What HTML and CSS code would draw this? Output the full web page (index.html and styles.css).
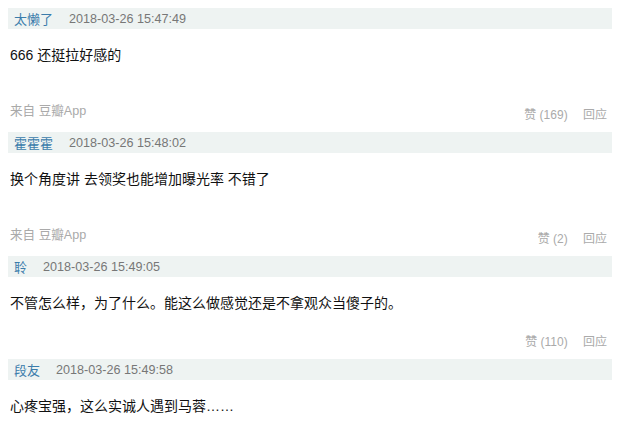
FILE: index.html
```html
<!DOCTYPE html>
<html lang="zh-CN">
<head>
    <meta charset="UTF-8">
    <title>评论</title>
    <link rel="stylesheet" href="styles.css">
</head>
<body>
    <div class="comments">
        <div class="comment">
            <div class="comment-head">
                <span class="author">太懒了</span>
                <span class="time">2018-03-26 15:47:49</span>
            </div>
            <p class="comment-text">666 还挺拉好感的</p>
            <div class="comment-foot">
                <span class="source">来自 豆瓣App</span>
                <div class="actions">
                    <span>赞 (169)</span>
                    <span class="reply">回应</span>
                </div>
            </div>
        </div>

        <div class="comment">
            <div class="comment-head">
                <span class="author">霍霍霍</span>
                <span class="time">2018-03-26 15:48:02</span>
            </div>
            <p class="comment-text">换个角度讲 去领奖也能增加曝光率 不错了</p>
            <div class="comment-foot">
                <span class="source">来自 豆瓣App</span>
                <div class="actions">
                    <span>赞 (2)</span>
                    <span class="reply">回应</span>
                </div>
            </div>
        </div>

        <div class="comment">
            <div class="comment-head">
                <span class="author">聆</span>
                <span class="time">2018-03-26 15:49:05</span>
            </div>
            <p class="comment-text">不管怎么样，为了什么。能这么做感觉还是不拿观众当傻子的。</p>
            <div class="comment-foot">
                <div class="actions">
                    <span>赞 (110)</span>
                    <span class="reply">回应</span>
                </div>
            </div>
        </div>

        <div class="comment">
            <div class="comment-head">
                <span class="author">段友</span>
                <span class="time">2018-03-26 15:49:58</span>
            </div>
            <p class="comment-text">心疼宝强，这么实诚人遇到马蓉……</p>
        </div>
    </div>
</body>
</html>
```

FILE: styles.css
```css
body {
    margin: 8px;
    background: #ffffff;
    font-family: "Liberation Sans", "Noto Sans CJK SC", sans-serif;
    color: #111111;
}

.comments {
    width: 604px;
}

.comment {
    margin-bottom: 7px;
}

.comment-head {
    height: 21px;
    display: flex;
    align-items: center;
    gap: 16px;
    padding: 0 6px;
    background: #eef3f2;
}

.author {
    color: #3b7cab;
    font-size: 13px;
}

.time {
    color: #777777;
    font-size: 12.6px;
}

.comment-text {
    margin: 16px 0 0 2px;
    font-size: 14px;
    line-height: 20px;
}

.comment-foot {
    display: flex;
    justify-content: space-between;
    align-items: flex-end;
    margin-top: 19px;
    padding: 0 5px 0 2px;
    color: #aaaaaa;
    font-size: 12px;
    line-height: 20px;
}

.source {
    margin: 17px 0 4px;
    font-size: 12.6px;
}

.actions {
    margin-left: auto;
}

.reply {
    margin-left: 12px;
}
```
